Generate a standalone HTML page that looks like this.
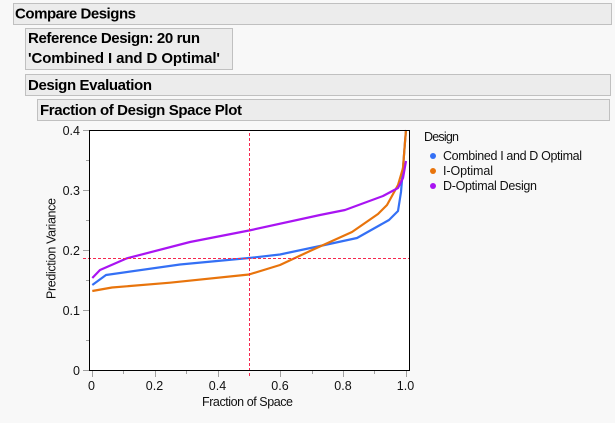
<!DOCTYPE html>
<html><head><meta charset="utf-8"><style>
html,body{margin:0;padding:0;background:#f8f8f8;overflow:hidden;width:615px;height:423px}
svg{display:block}
text{font-family:"Liberation Sans",sans-serif;fill:#111}
.h{font-weight:bold;font-size:15px;fill:#000}
.t{font-size:12.5px}
.m{text-anchor:middle}
.e{text-anchor:end}
</style></head><body>
<svg width="615" height="423" viewBox="0 0 615 423" xmlns="http://www.w3.org/2000/svg">
<rect width="615" height="423" fill="#f8f8f8"/>
<g fill="#ececec" stroke="#c0c0c0" stroke-width="1">
<rect x="13.5" y="3.5" width="598" height="21"/>
<rect x="25.5" y="28.5" width="207" height="41"/>
<rect x="25.5" y="74.5" width="585" height="21"/>
<rect x="37.5" y="99.5" width="572" height="21"/>
</g>
<text class="h" x="15" y="18.5" textLength="121">Compare Designs</text>
<text class="h" x="28" y="43" textLength="172">Reference Design: 20 run</text>
<text class="h" x="28" y="63" textLength="192">'Combined I and D Optimal'</text>
<text class="h" x="28" y="90" textLength="124">Design Evaluation</text>
<text class="h" x="40" y="115" textLength="202">Fraction of Design Space Plot</text>

<rect x="89.5" y="130.5" width="320" height="240" fill="#fff"/>
<g stroke="#a0a0a0" stroke-width="1" fill="none">
<path d="M83 130.5H89M83 190.5H89M83 250.5H89M83 310.5H89M83 370.5H89"/>
<path d="M86 160.5H89M86 220.5H89M86 280.5H89M86 340.5H89"/>
<path d="M92.5 371V377M155.5 371V377M218.5 371V377M280.5 371V377M343.5 371V377M406.5 371V377"/>
<path d="M123.5 371V374M186.5 371V374M312.5 371V374M374.5 371V374"/>
</g>
<g fill="none" stroke-linejoin="round" stroke-width="2.2">
<path stroke="#3470f5" d="M92.3 285L106 275L180 264.5L249 258L280 254.5L320 246L357 238L389 220L398 211L401 192L403 168L405 142L406 130"/>
<path stroke="#e8740c" d="M92.3 291L112 287.5L170 282.7L249 274.5L280 265L310 251L352 232L378 214L387 205L398 185L403 168L405 142L406 130"/>
<path stroke="#a914f2" d="M92.3 278L100 270L127 258.3L190 242L249 230.5L320 215L345 210L383 196L398 188L403 178L406 161"/>
</g>
<g fill="none" stroke="#f5284f" stroke-width="1" stroke-dasharray="3 2">
<path d="M83 258.5H409"/>
<path d="M249.5 133V377"/>
</g>
<rect x="89.5" y="130.5" width="320" height="240" fill="none" stroke="#000" stroke-width="1"/>

<g class="t">
<text class="t e" x="80" y="135">0.4</text>
<text class="t e" x="80" y="195">0.3</text>
<text class="t e" x="80" y="255">0.2</text>
<text class="t e" x="80" y="315">0.1</text>
<text class="t e" x="80" y="375">0</text>
<text class="t m" x="91.5" y="390">0</text>
<text class="t m" x="154.5" y="390">0.2</text>
<text class="t m" x="217.5" y="390">0.4</text>
<text class="t m" x="280" y="390">0.6</text>
<text class="t m" x="343" y="390">0.8</text>
<text class="t m" x="405.5" y="390">1.0</text>
<text class="t" x="202" y="406" textLength="91">Fraction of Space</text>
<text class="t" transform="translate(55.5 299) rotate(-90)" textLength="101">Prediction Variance</text>
<text class="t" x="424" y="141" textLength="35">Design</text>
<text class="t" x="443" y="160" textLength="139">Combined I and D Optimal</text>
<text class="t" x="443" y="175" textLength="50">I-Optimal</text>
<text class="t" x="443" y="190" textLength="94">D-Optimal Design</text>
</g>
<circle cx="433" cy="156" r="3" fill="#3470f5"/>
<circle cx="433" cy="171" r="3" fill="#e8740c"/>
<circle cx="433" cy="186" r="3" fill="#a914f2"/>
</svg>
</body></html>
